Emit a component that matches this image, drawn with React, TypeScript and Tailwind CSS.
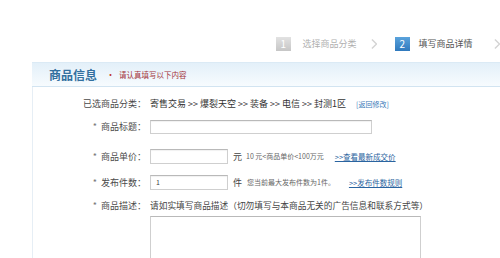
function Chevron({ className = '' }: { className?: string }) {
  return (
    <svg className={className} width="7" height="12" viewBox="0 0 7 12" fill="none">
      <path d="M1 1l5 5-5 5" stroke="#d4d4d4" strokeWidth="1.6" />
    </svg>
  );
}

function Label({ text }: { text: string }) {
  return (
    <div className="w-[117px] shrink-0 pr-[4px] text-right text-[9px] leading-[12px] text-[#4a4a4a]">
      <span className="mr-[4px] text-[#777]">*</span>
      {text}
    </div>
  );
}

export default function App() {
  return (
    <div className="w-[500px] h-[258px] overflow-hidden bg-white font-['Noto_Sans_CJK_SC','Noto_Sans',sans-serif]">
      {/* Steps */}
      <div className="flex items-center h-[18px] mt-[35px] pl-[276px]">
        <span className="w-[16px] h-[14px] flex items-center justify-center bg-gradient-to-b from-[#e2e2e2] to-[#c6c6c6] text-white text-[10px] leading-none">
          1
        </span>
        <span className="ml-[12px] text-[9px] text-[#b0b0b0] whitespace-nowrap">选择商品分类</span>
        <Chevron className="ml-[14px]" />
        <span className="ml-[18px] w-[16px] h-[14px] flex items-center justify-center bg-gradient-to-b from-[#5aa3dc] to-[#2f79bd] text-white text-[10px] leading-none">
          2
        </span>
        <span className="ml-[9px] text-[9px] text-[#555] whitespace-nowrap">填写商品详情</span>
        <Chevron className="ml-[21px]" />
      </div>

      {/* Section header */}
      <div className="ml-[32px] mt-[9px] h-[25px] flex items-center pl-[17px] border-t border-b border-t-[#dbeaf5] border-b-[#d2e4f1] bg-gradient-to-b from-[#e3f0f9] to-[#f7fbfe]">
        <span className="text-[12px] font-semibold text-[#33709f] whitespace-nowrap">商品信息</span>
        <span className="ml-[9px] text-[9px] text-[#c0392b]">•</span>
        <span className="ml-[4px] text-[7.5px] text-[#a3323a] whitespace-nowrap">请认真填写以下内容</span>
      </div>

      {/* Body */}
      <div className="ml-[32px] border-l border-[#e6eef5] h-[200px]">
        {/* category */}
        <div className="flex items-center pt-[11px] text-[9px] leading-[12px] whitespace-nowrap">
          <div className="w-[117px] shrink-0 pr-[4px] text-right text-[#4a4a4a]">已选商品分类：</div>
          <span className="text-[#333]">寄售交易 &gt;&gt; 爆裂天空 &gt;&gt; 装备 &gt;&gt; 电信 &gt;&gt; 封测1区</span>
          <span className="ml-[10px] text-[7px] text-[#3a78b8]">[返回修改]</span>
        </div>

        {/* title */}
        <div className="flex items-center mt-[10px] h-[14px]">
          <Label text="商品标题：" />
          <div className="w-[222px] h-[14px] border border-[#cfcfcf] border-t-[#b9b9b9] bg-white shadow-[inset_0_1px_1px_rgba(0,0,0,0.06)]" />
        </div>

        {/* price */}
        <div className="flex items-center mt-[15px] h-[15px] whitespace-nowrap">
          <Label text="商品单价：" />
          <div className="w-[78px] h-[15px] border border-[#cfcfcf] border-t-[#b9b9b9] bg-white shadow-[inset_0_1px_1px_rgba(0,0,0,0.06)]" />
          <span className="ml-[5px] text-[9px] text-[#444]">元</span>
          <span className="ml-[4px] text-[7px] text-[#666]">10 元&lt;商品单价&lt;100万元</span>
          <span className="ml-[11px] text-[7.5px] text-[#2a64a0] underline">&gt;&gt;查看最新成交价</span>
        </div>

        {/* count */}
        <div className="flex items-center mt-[11px] h-[15px] whitespace-nowrap">
          <Label text="发布件数：" />
          <div className="w-[78px] h-[15px] border border-[#cfcfcf] border-t-[#b9b9b9] bg-white flex items-center pl-[5px] text-[7px] text-[#444] shadow-[inset_0_1px_1px_rgba(0,0,0,0.06)]">
            1
          </div>
          <span className="ml-[5px] text-[9px] text-[#444]">件</span>
          <span className="ml-[5px] text-[7px] text-[#666]">您当前最大发布件数为1件。</span>
          <span className="ml-[14px] text-[7.5px] text-[#2a64a0] underline">&gt;&gt;发布件数规则</span>
        </div>

        {/* description */}
        <div className="flex items-center mt-[10px] whitespace-nowrap">
          <Label text="商品描述：" />
          <span className="text-[8.7px] leading-[12px] text-[#444]">请如实填写商品描述（切勿填写与本商品无关的广告信息和联系方式等）</span>
        </div>
        <div className="ml-[117px] mt-[4px] w-[271px] h-[60px] border border-[#cfcfcf] border-t-[#b9b9b9] bg-white" />
      </div>
    </div>
  );
}
